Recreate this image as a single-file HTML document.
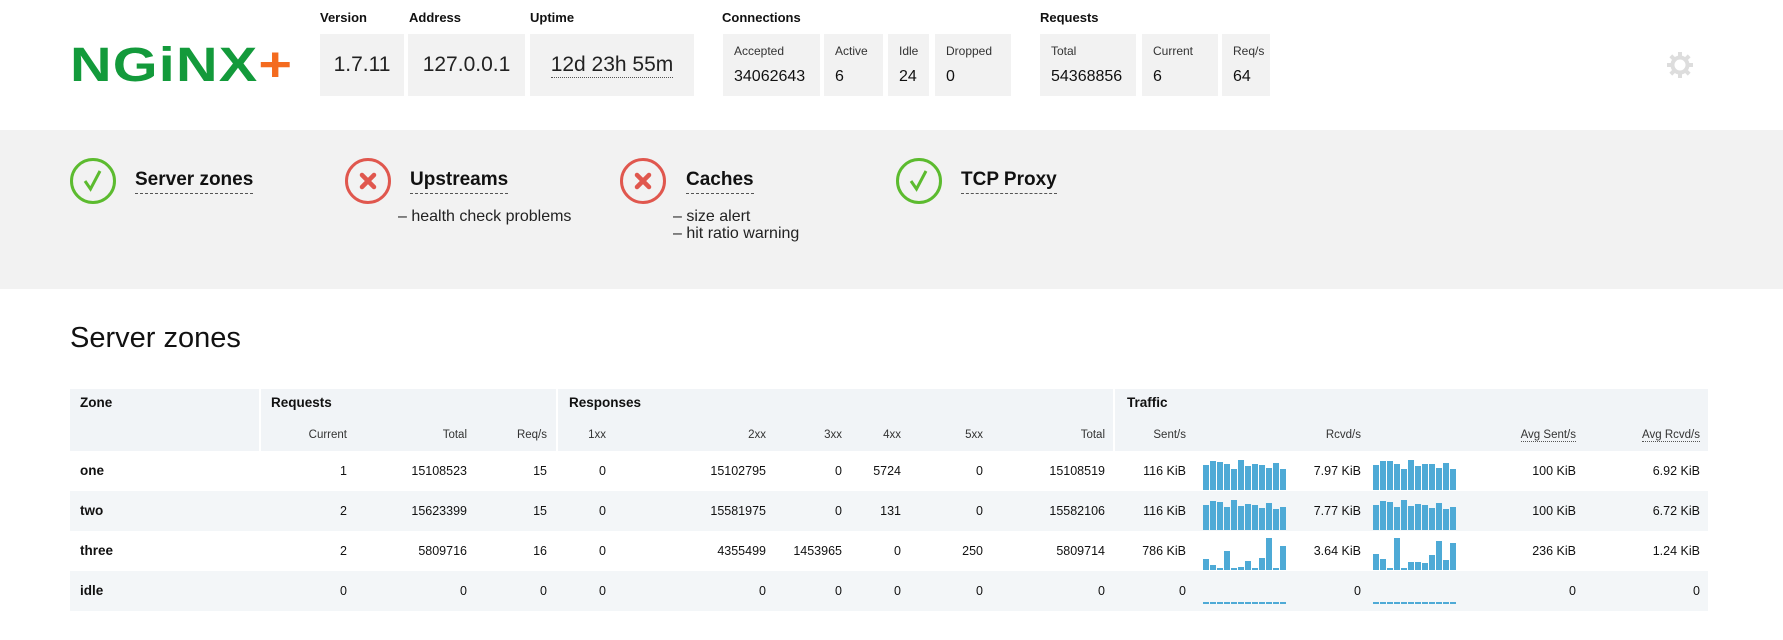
<!DOCTYPE html>
<html><head><meta charset="utf-8"><style>
*{margin:0;padding:0;box-sizing:border-box}
body{width:1783px;height:640px;background:#fff;font-family:"Liberation Sans",sans-serif;color:#111;position:relative;overflow:hidden}
.a{position:absolute}
.lbl{font-size:13px;font-weight:bold;top:10px}
.box{background:#f2f2f2;top:34px;height:62px}
.big{font-size:21px;color:#222;line-height:62px;text-align:center}
.sm{font-size:12px;color:#333;position:absolute;left:11px;top:10px}
.val{font-size:16px;color:#111;position:absolute;left:11px;top:34px}
.band{left:0;top:130px;width:1783px;height:159px;background:#f2f2f2}
.st{font-size:19px;font-weight:bold;top:169px;border-bottom:1px dashed #555;line-height:22px;padding-bottom:2px}
.sub{font-size:16px;color:#222;line-height:17px}
.c{width:200px;text-align:right;font-size:12.5px;line-height:16px}
.h{font-size:13.5px;font-weight:bold;line-height:16px}
.row{left:70px;width:1638px;height:40px}
</style></head><body>
<div class="a" style="left:70px;top:38px;font-size:48px;font-weight:bold;color:#139a3b;letter-spacing:1px;line-height:56px;transform:scaleX(1.2);transform-origin:0 0">NGiNX<span style="color:#f46b1f">+</span></div>

<div class="a lbl" style="left:320px">Version</div>
<div class="a lbl" style="left:409px">Address</div>
<div class="a lbl" style="left:530px">Uptime</div>
<div class="a lbl" style="left:722px">Connections</div>
<div class="a lbl" style="left:1040px">Requests</div>

<div class="a box big" style="left:320px;width:84px">1.7.11</div>
<div class="a box big" style="left:408px;width:117px">127.0.0.1</div>
<div class="a box big" style="left:530px;width:164px"><span style="border-bottom:1px dotted #555;line-height:24px;display:inline-block">12d 23h 55m</span></div>

<div class="a box" style="left:723px;width:97px"><span class="sm">Accepted</span><span class="val">34062643</span></div>
<div class="a box" style="left:824px;width:59px"><span class="sm">Active</span><span class="val">6</span></div>
<div class="a box" style="left:888px;width:41px"><span class="sm">Idle</span><span class="val">24</span></div>
<div class="a box" style="left:935px;width:76px"><span class="sm">Dropped</span><span class="val">0</span></div>
<div class="a box" style="left:1040px;width:96px"><span class="sm">Total</span><span class="val">54368856</span></div>
<div class="a box" style="left:1142px;width:76px"><span class="sm">Current</span><span class="val">6</span></div>
<div class="a box" style="left:1222px;width:48px"><span class="sm">Req/s</span><span class="val">64</span></div>

<svg class="a" style="left:1666px;top:51px" width="28" height="28" viewBox="0 0 28 28"><g stroke="#ddd" fill="none"><circle cx="14" cy="14" r="7.5" stroke-width="4"/><g stroke-width="4"><line x1="14" y1="1" x2="14" y2="6"/><line x1="14" y1="22" x2="14" y2="27"/><line x1="1" y1="14" x2="6" y2="14"/><line x1="22" y1="14" x2="27" y2="14"/><line x1="4.8" y1="4.8" x2="8.3" y2="8.3"/><line x1="19.7" y1="19.7" x2="23.2" y2="23.2"/><line x1="4.8" y1="23.2" x2="8.3" y2="19.7"/><line x1="19.7" y1="8.3" x2="23.2" y2="4.8"/></g></g></svg>

<div class="a band"></div>
<svg class="a" style="left:69px;top:157px" width="48" height="48"><circle cx="24" cy="24" r="21.5" fill="none" stroke="#5cbb2f" stroke-width="3"/><path d="M16 24 L21.5 32 L31 14" fill="none" stroke="#5cbb2f" stroke-width="3"/></svg>
<div class="a st" style="left:135px">Server zones</div>
<svg class="a" style="left:344px;top:157px" width="48" height="48"><circle cx="24" cy="24" r="21.5" fill="none" stroke="#e0574e" stroke-width="3"/><path d="M18 18 L30 30 M30 18 L18 30" stroke="#e0574e" stroke-width="4.5" stroke-linecap="round"/></svg>
<div class="a st" style="left:410px">Upstreams</div>
<div class="a sub" style="left:398px;top:208px">– health check problems</div>
<svg class="a" style="left:619px;top:157px" width="48" height="48"><circle cx="24" cy="24" r="21.5" fill="none" stroke="#e0574e" stroke-width="3"/><path d="M18 18 L30 30 M30 18 L18 30" stroke="#e0574e" stroke-width="4.5" stroke-linecap="round"/></svg>
<div class="a st" style="left:686px">Caches</div>
<div class="a sub" style="left:673px;top:208px">– size alert<br>– hit ratio warning</div>
<svg class="a" style="left:895px;top:157px" width="48" height="48"><circle cx="24" cy="24" r="21.5" fill="none" stroke="#5cbb2f" stroke-width="3"/><path d="M16 24 L21.5 32 L31 14" fill="none" stroke="#5cbb2f" stroke-width="3"/></svg>
<div class="a st" style="left:961px">TCP Proxy</div>

<div class="a" style="left:70px;top:322px;font-size:29px;color:#111;font-weight:300">Server zones</div>

<div class="a" style="left:70px;top:389px;width:189px;height:62px;background:#f1f4f7"></div>
<div class="a" style="left:261px;top:389px;width:295px;height:62px;background:#f1f4f7"></div>
<div class="a" style="left:558px;top:389px;width:555px;height:62px;background:#f1f4f7"></div>
<div class="a" style="left:1115px;top:389px;width:593px;height:62px;background:#f1f4f7"></div>
<div class="a row" style="top:491px;background:#f3f6f8"></div>
<div class="a row" style="top:571px;background:#f3f6f8"></div>

<div class="a h" style="left:80px;top:395px">Zone</div>
<div class="a h" style="left:271px;top:395px">Requests</div>
<div class="a h" style="left:569px;top:395px">Responses</div>
<div class="a h" style="left:1127px;top:395px">Traffic</div>

<div class="a c" style="left:147px;top:427px;font-size:11.5px;color:#333">Current</div>
<div class="a c" style="left:267px;top:427px;font-size:11.5px;color:#333">Total</div>
<div class="a c" style="left:347px;top:427px;font-size:11.5px;color:#333">Req/s</div>
<div class="a c" style="left:406px;top:427px;font-size:11.5px;color:#333">1xx</div>
<div class="a c" style="left:566px;top:427px;font-size:11.5px;color:#333">2xx</div>
<div class="a c" style="left:642px;top:427px;font-size:11.5px;color:#333">3xx</div>
<div class="a c" style="left:701px;top:427px;font-size:11.5px;color:#333">4xx</div>
<div class="a c" style="left:783px;top:427px;font-size:11.5px;color:#333">5xx</div>
<div class="a c" style="left:905px;top:427px;font-size:11.5px;color:#333">Total</div>
<div class="a c" style="left:986px;top:427px;font-size:11.5px;color:#333">Sent/s</div>
<div class="a c" style="left:1161px;top:427px;font-size:11.5px;color:#333">Rcvd/s</div>
<div class="a c" style="left:1376px;top:427px;font-size:11.5px;color:#333"><span style="border-bottom:1px dotted #555">Avg Sent/s</span></div>
<div class="a c" style="left:1500px;top:427px;font-size:11.5px;color:#333"><span style="border-bottom:1px dotted #555">Avg Rcvd/s</span></div>

<div class="a h" style="left:80px;top:463px">one</div>
<div class="a h" style="left:80px;top:503px">two</div>
<div class="a h" style="left:80px;top:543px">three</div>
<div class="a h" style="left:80px;top:583px">idle</div>

<div class="a c" style="left:147px;top:463px">1</div><div class="a c" style="left:267px;top:463px">15108523</div><div class="a c" style="left:347px;top:463px">15</div><div class="a c" style="left:406px;top:463px">0</div><div class="a c" style="left:566px;top:463px">15102795</div><div class="a c" style="left:642px;top:463px">0</div><div class="a c" style="left:701px;top:463px">5724</div><div class="a c" style="left:783px;top:463px">0</div><div class="a c" style="left:905px;top:463px">15108519</div><div class="a c" style="left:986px;top:463px">116 KiB</div><div class="a c" style="left:1161px;top:463px">7.97 KiB</div><div class="a c" style="left:1376px;top:463px">100 KiB</div><div class="a c" style="left:1500px;top:463px">6.92 KiB</div>
<div class="a c" style="left:147px;top:503px">2</div><div class="a c" style="left:267px;top:503px">15623399</div><div class="a c" style="left:347px;top:503px">15</div><div class="a c" style="left:406px;top:503px">0</div><div class="a c" style="left:566px;top:503px">15581975</div><div class="a c" style="left:642px;top:503px">0</div><div class="a c" style="left:701px;top:503px">131</div><div class="a c" style="left:783px;top:503px">0</div><div class="a c" style="left:905px;top:503px">15582106</div><div class="a c" style="left:986px;top:503px">116 KiB</div><div class="a c" style="left:1161px;top:503px">7.77 KiB</div><div class="a c" style="left:1376px;top:503px">100 KiB</div><div class="a c" style="left:1500px;top:503px">6.72 KiB</div>
<div class="a c" style="left:147px;top:543px">2</div><div class="a c" style="left:267px;top:543px">5809716</div><div class="a c" style="left:347px;top:543px">16</div><div class="a c" style="left:406px;top:543px">0</div><div class="a c" style="left:566px;top:543px">4355499</div><div class="a c" style="left:642px;top:543px">1453965</div><div class="a c" style="left:701px;top:543px">0</div><div class="a c" style="left:783px;top:543px">250</div><div class="a c" style="left:905px;top:543px">5809714</div><div class="a c" style="left:986px;top:543px">786 KiB</div><div class="a c" style="left:1161px;top:543px">3.64 KiB</div><div class="a c" style="left:1376px;top:543px">236 KiB</div><div class="a c" style="left:1500px;top:543px">1.24 KiB</div>
<div class="a c" style="left:147px;top:583px">0</div><div class="a c" style="left:267px;top:583px">0</div><div class="a c" style="left:347px;top:583px">0</div><div class="a c" style="left:406px;top:583px">0</div><div class="a c" style="left:566px;top:583px">0</div><div class="a c" style="left:642px;top:583px">0</div><div class="a c" style="left:701px;top:583px">0</div><div class="a c" style="left:783px;top:583px">0</div><div class="a c" style="left:905px;top:583px">0</div><div class="a c" style="left:986px;top:583px">0</div><div class="a c" style="left:1161px;top:583px">0</div><div class="a c" style="left:1376px;top:583px">0</div><div class="a c" style="left:1500px;top:583px">0</div>

<svg class="a" style="left:1203px;top:458px" width="84" height="32" fill="#4eaad6"><rect x="0" y="7" width="6" height="25"/><rect x="7" y="3" width="6" height="29"/><rect x="14" y="4" width="6" height="28"/><rect x="21" y="6" width="6" height="26"/><rect x="28" y="11" width="6" height="21"/><rect x="35" y="2" width="6" height="30"/><rect x="42" y="8" width="6" height="24"/><rect x="49" y="6" width="6" height="26"/><rect x="56" y="7" width="6" height="25"/><rect x="63" y="10" width="6" height="22"/><rect x="70" y="5" width="6" height="27"/><rect x="77" y="11" width="6" height="21"/></svg>
<svg class="a" style="left:1373px;top:458px" width="84" height="32" fill="#4eaad6"><rect x="0" y="7" width="6" height="25"/><rect x="7" y="3" width="6" height="29"/><rect x="14" y="3" width="6" height="29"/><rect x="21" y="6" width="6" height="26"/><rect x="28" y="11" width="6" height="21"/><rect x="35" y="2" width="6" height="30"/><rect x="42" y="8" width="6" height="24"/><rect x="49" y="6" width="6" height="26"/><rect x="56" y="6" width="6" height="26"/><rect x="63" y="10" width="6" height="22"/><rect x="70" y="5" width="6" height="27"/><rect x="77" y="11" width="6" height="21"/></svg>
<svg class="a" style="left:1203px;top:498px" width="84" height="32" fill="#4eaad6"><rect x="0" y="7" width="6" height="25"/><rect x="7" y="3" width="6" height="29"/><rect x="14" y="4" width="6" height="28"/><rect x="21" y="9" width="6" height="23"/><rect x="28" y="2" width="6" height="30"/><rect x="35" y="8" width="6" height="24"/><rect x="42" y="6" width="6" height="26"/><rect x="49" y="7" width="6" height="25"/><rect x="56" y="10" width="6" height="22"/><rect x="63" y="5" width="6" height="27"/><rect x="70" y="11" width="6" height="21"/><rect x="77" y="9" width="6" height="23"/></svg>
<svg class="a" style="left:1373px;top:498px" width="84" height="32" fill="#4eaad6"><rect x="0" y="7" width="6" height="25"/><rect x="7" y="3" width="6" height="29"/><rect x="14" y="4" width="6" height="28"/><rect x="21" y="9" width="6" height="23"/><rect x="28" y="2" width="6" height="30"/><rect x="35" y="8" width="6" height="24"/><rect x="42" y="6" width="6" height="26"/><rect x="49" y="7" width="6" height="25"/><rect x="56" y="10" width="6" height="22"/><rect x="63" y="5" width="6" height="27"/><rect x="70" y="11" width="6" height="21"/><rect x="77" y="9" width="6" height="23"/></svg>
<svg class="a" style="left:1203px;top:538px" width="84" height="32" fill="#4eaad6"><rect x="0" y="21" width="6" height="11"/><rect x="7" y="27" width="6" height="5"/><rect x="14" y="30" width="6" height="2"/><rect x="21" y="13" width="6" height="19"/><rect x="28" y="30" width="6" height="2"/><rect x="35" y="29" width="6" height="3"/><rect x="42" y="23" width="6" height="9"/><rect x="49" y="30" width="6" height="2"/><rect x="56" y="20" width="6" height="12"/><rect x="63" y="0" width="6" height="32"/><rect x="70" y="30" width="6" height="2"/><rect x="77" y="8" width="6" height="24"/></svg>
<svg class="a" style="left:1373px;top:538px" width="84" height="32" fill="#4eaad6"><rect x="0" y="16" width="6" height="16"/><rect x="7" y="21" width="6" height="11"/><rect x="14" y="30" width="6" height="2"/><rect x="21" y="0" width="6" height="32"/><rect x="28" y="30" width="6" height="2"/><rect x="35" y="24" width="6" height="8"/><rect x="42" y="24" width="6" height="8"/><rect x="49" y="25" width="6" height="7"/><rect x="56" y="17" width="6" height="15"/><rect x="63" y="3" width="6" height="29"/><rect x="70" y="22" width="6" height="10"/><rect x="77" y="5" width="6" height="27"/></svg>
<svg class="a" style="left:1203px;top:601px" width="84" height="4"><line x1="0" y1="2" x2="84" y2="2" stroke="#4eaad6" stroke-width="2" stroke-dasharray="6 1"/></svg>
<svg class="a" style="left:1373px;top:601px" width="84" height="4"><line x1="0" y1="2" x2="84" y2="2" stroke="#4eaad6" stroke-width="2" stroke-dasharray="6 1"/></svg>
</body></html>
